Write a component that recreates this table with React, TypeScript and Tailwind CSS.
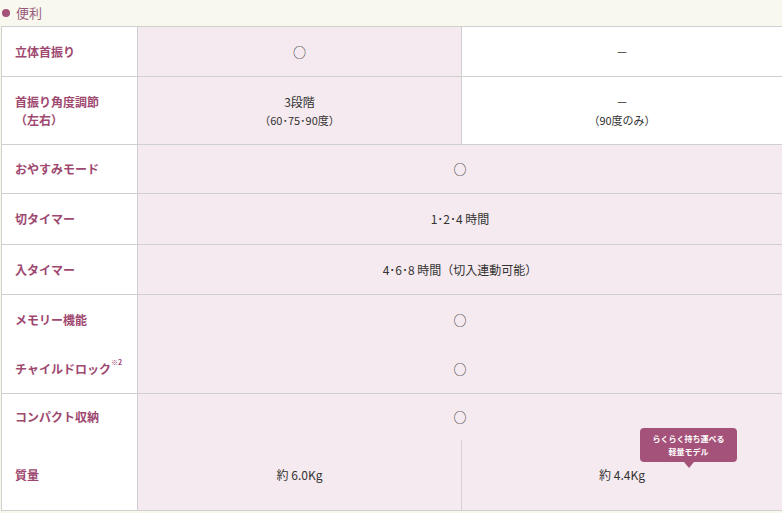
import React from "react";

const label = "text-[12px] font-bold text-[#9e4870]";
const body = "text-[12px] text-[#333] leading-[18px]";
const circle = <span className="text-[13px] text-[#333]">○</span>;

const Row = ({
  name,
  h,
  children,
}: {
  name: React.ReactNode;
  h: string;
  children: React.ReactNode;
}) => (
  <div className={`flex border-b border-[#cfcfcf] ${h}`}>
    <div className="w-[136px] shrink-0 border-r border-[#cfcfcf] bg-white flex items-center pl-[13px]">
      {name}
    </div>
    {children}
  </div>
);

const App = () => {
  return (
    <div
      className="w-[782px] h-[513px] overflow-hidden bg-[#f8f8ef]"
      style={{ fontFamily: '"Noto Sans CJK JP", "Noto Sans", sans-serif' }}
    >
      <div className="h-[26px] flex items-center gap-[6px] pl-[2px]">
        <span className="w-[8px] h-[8px] rounded-full bg-[#a5527a]"></span>
        <span className="text-[13px] text-[#9a5c7e]">便利</span>
      </div>

      <div className="ml-[1px] border-l border-t border-[#cfcfcf]">
        <Row name={<span className={label}>立体首振り</span>} h="h-[50px]">
          <div className="w-[324px] shrink-0 border-r border-[#cfcfcf] bg-[#f5eaef] flex items-center justify-center">
            {circle}
          </div>
          <div className="flex-1 bg-white flex items-center justify-center">
            <span className={body}>－</span>
          </div>
        </Row>

        <Row
          name={
            <span className={`${label} leading-[18px]`}>
              首振り角度調節
              <br />
              （左右）
            </span>
          }
          h="h-[68px]"
        >
          <div className="w-[324px] shrink-0 border-r border-[#cfcfcf] bg-[#f5eaef] flex flex-col items-center justify-center">
            <span className={body}>3段階</span>
            <span className="text-[11px] text-[#333] leading-[18px]">（60･75･90度）</span>
          </div>
          <div className="flex-1 bg-white flex flex-col items-center justify-center">
            <span className={body}>－</span>
            <span className="text-[11px] text-[#333] leading-[18px]">（90度のみ）</span>
          </div>
        </Row>

        <Row name={<span className={label}>おやすみモード</span>} h="h-[49px]">
          <div className="flex-1 bg-[#f5eaef] flex items-center justify-center">
            {circle}
          </div>
        </Row>

        <Row name={<span className={label}>切タイマー</span>} h="h-[51px]">
          <div className="flex-1 bg-[#f5eaef] flex items-center justify-center">
            <span className={body}>1･2･4 時間</span>
          </div>
        </Row>

        <Row name={<span className={label}>入タイマー</span>} h="h-[50px]">
          <div className="flex-1 bg-[#f5eaef] flex items-center justify-center">
            <span className={body}>4･6･8 時間（切入連動可能）</span>
          </div>
        </Row>

        <div className="flex border-b border-[#cfcfcf] h-[99px]">
          <div className="w-[136px] shrink-0 border-r border-[#cfcfcf] bg-white flex flex-col pl-[13px]">
            <div className="h-[49px] flex items-center">
              <span className={label}>メモリー機能</span>
            </div>
            <div className="h-[49px] flex items-center">
              <span className={label}>
                チャイルドロック<sup className="text-[7px] align-top relative top-[2px]">※2</sup>
              </span>
            </div>
          </div>
          <div className="flex-1 bg-[#f5eaef] flex flex-col">
            <div className="h-[49px] flex items-center justify-center">{circle}</div>
            <div className="h-[49px] flex items-center justify-center">{circle}</div>
          </div>
        </div>

        <div className="relative flex border-b border-[#cfcfcf] h-[117px]">
          <div className="w-[136px] shrink-0 border-r border-[#cfcfcf] bg-white flex flex-col pl-[13px]">
            <div className="h-[46px] flex items-center">
              <span className={label}>コンパクト収納</span>
            </div>
            <div className="flex-1 flex items-center">
              <span className={label}>質量</span>
            </div>
          </div>
          <div className="flex-1 bg-[#f5eaef] flex flex-col">
            <div className="h-[46px] flex items-center justify-center">{circle}</div>
            <div className="flex-1 flex">
              <div className="w-[324px] shrink-0 border-r border-[#d6d0d3] flex items-center justify-center">
                <span className={body}>約 6.0Kg</span>
              </div>
              <div className="flex-1 flex items-center justify-center">
                <span className={body}>約 4.4Kg</span>
              </div>
            </div>
          </div>

          <div className="absolute left-[638px] top-[34px] w-[97px] h-[34px] rounded-[4px] bg-[#a5527a] flex flex-col items-center justify-center">
            <span className="text-[8px] font-bold text-white leading-[13px]">らくらく持ち運べる</span>
            <span className="text-[8px] font-bold text-white leading-[13px]">軽量モデル</span>
            <span className="absolute left-[44px] -bottom-[6px] w-0 h-0 border-l-[5px] border-r-[5px] border-t-[6px] border-l-transparent border-r-transparent border-t-[#a5527a]"></span>
          </div>
        </div>
      </div>
    </div>
  );
};

export default App;
